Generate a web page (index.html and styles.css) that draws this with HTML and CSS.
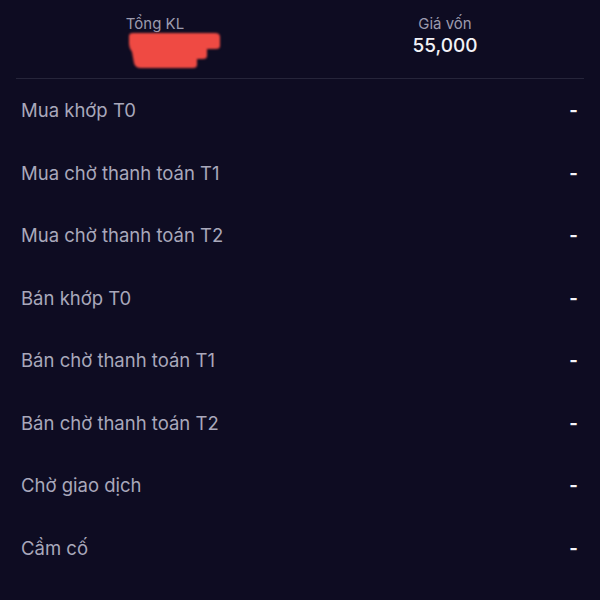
FILE: index.html
```html
<!DOCTYPE html>
<html lang="vi">
<head>
    <meta charset="UTF-8">
    <meta name="viewport" content="width=device-width, initial-scale=1.0">
    <title>Danh mục</title>
    <link rel="stylesheet" href="styles.css">
</head>
<body>
    <div class="summary">
        <div class="summary-col">
            <div class="summary-label">Tổng KL</div>
            <div class="summary-value">
                <svg class="blot" width="94" height="38" viewBox="0 0 94 38">
                    <path d="M2 4 Q2 1 6 1 L88 1 Q93 1 93 5 L93 14 Q93 17 89 17 L80 17 L80 24 Q80 27 76 27 L70 27 L70 33 Q70 36 66 36 L14 36 Q8 36 7 31 L5 20 Q2 16 2 12 Z" fill="#ef4a43"/>
                </svg>
            </div>
        </div>
        <div class="summary-col">
            <div class="summary-label">Giá vốn</div>
            <div class="summary-value">55,000</div>
        </div>
    </div>
    <div class="divider"></div>

    <ul class="rows">
        <li class="row"><span>Mua khớp T0</span><span class="dash">-</span></li>
        <li class="row"><span>Mua chờ thanh toán T1</span><span class="dash">-</span></li>
        <li class="row"><span>Mua chờ thanh toán T2</span><span class="dash">-</span></li>
        <li class="row"><span>Bán khớp T0</span><span class="dash">-</span></li>
        <li class="row"><span>Bán chờ thanh toán T1</span><span class="dash">-</span></li>
        <li class="row"><span>Bán chờ thanh toán T2</span><span class="dash">-</span></li>
        <li class="row"><span>Chờ giao dịch</span><span class="dash">-</span></li>
        <li class="row"><span>Cầm cố</span><span class="dash">-</span></li>
    </ul>
</body>
</html>
```

FILE: styles.css
```css
body {
    margin: 0;
    background-color: #0e0c22;
    font-family: Inter, "Liberation Sans", sans-serif;
    color: #a9a8bb;
}

.summary {
    display: flex;
    padding: 14px 10px 0;
    height: 64px;
}

.summary-col {
    flex: 1;
    display: flex;
    flex-direction: column;
    align-items: center;
}

.summary-label {
    font-size: 15px;
    line-height: 20px;
    color: #9c9bae;
}

.summary-value {
    font-size: 19px;
    line-height: 24px;
    font-weight: 500;
    color: #f2f2f7;
}

.blot {
    display: block;
    margin: -2px 0 0 38px;
    filter: blur(1px);
}

.divider {
    height: 1px;
    margin: 0 16px;
    background-color: #26253a;
}

.rows {
    list-style: none;
    margin: 0;
    padding: 0;
}

.row {
    display: flex;
    justify-content: space-between;
    align-items: center;
    height: 62.5px;
    padding: 0 22px 0 21px;
    font-size: 18.5px;
}

.dash {
    color: #f5f5fa;
    font-weight: 700;
}
```
